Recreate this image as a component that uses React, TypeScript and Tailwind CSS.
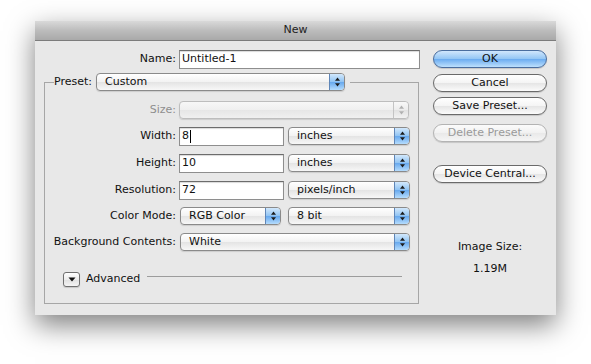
import React from "react";

function Stepper({ disabled }: { disabled?: boolean }) {
  return (
    <div
      className={
        disabled
          ? "flex h-full w-[15px] items-center justify-center rounded-r-[3px] border-l border-[#c4c4c4] bg-[linear-gradient(#f8f8f8,#ececec_50%,#e2e2e2_51%,#f2f2f2)]"
          : "flex h-full w-[15px] items-center justify-center rounded-r-[3px] border-l border-[#5f86b8] bg-[linear-gradient(#d2e8fc,#8fc3f3_50%,#66a8ee_51%,#b5dcfd)]"
      }
    >
      <svg width="7" height="10" viewBox="0 0 7 10">
        <path d="M3.5 0.5 L6 3.8 L1 3.8 Z" fill={disabled ? "#b0b0b0" : "#1b1b1b"} />
        <path d="M3.5 9.5 L6 6.2 L1 6.2 Z" fill={disabled ? "#b0b0b0" : "#1b1b1b"} />
      </svg>
    </div>
  );
}

function Select({ label, w, disabled }: { label: string; w: string; disabled?: boolean }) {
  return (
    <div
      className={
        "flex h-[18px] items-center overflow-hidden rounded-[4px] border shadow-[0_1px_1px_rgba(0,0,0,0.12)] " +
        w +
        (disabled
          ? " border-[#bdbdbd] bg-[linear-gradient(#f7f7f7,#efefef_50%,#e6e6e6_51%,#f0f0f0)]"
          : " border-[#8a8a8a] bg-[linear-gradient(#ffffff,#f2f2f2_50%,#e4e4e4_51%,#f7f7f7)]")
      }
    >
      <span className="flex-1 truncate pl-[8px] leading-[16px] text-[#111]">{label}</span>
      <Stepper disabled={disabled} />
    </div>
  );
}

function Input({ value, w, cursor }: { value: string; w: string; cursor?: boolean }) {
  return (
    <div
      className={
        "flex h-[19px] items-center border border-[#8e8e8e] border-t-[#6c6c6c] bg-white pl-[2px] shadow-[inset_0_1px_1px_rgba(0,0,0,0.15)] " +
        w
      }
    >
      <span className="leading-[16px] text-[#111]">{value}</span>
      {cursor && <span className="ml-[1px] h-[13px] w-[1px] bg-black" />}
    </div>
  );
}

function Button({ label, kind }: { label: string; kind?: "default" | "disabled" }) {
  const cls =
    kind === "default"
      ? "border-[#4a6d9e] bg-[linear-gradient(#d0e6fc,#92c5f4_50%,#6aabf0_51%,#bde0fd)] text-[#111]"
      : kind === "disabled"
      ? "border-[#b3b3b3] bg-[linear-gradient(#fbfbfb,#f1f1f1_50%,#e9e9e9_51%,#f5f5f5)] text-[#9a9a9a]"
      : "border-[#6a6a6a] bg-[linear-gradient(#ffffff,#f4f4f4_50%,#e5e5e5_51%,#fbfbfb)] text-[#111]";
  return (
    <div
      className={
        "flex h-[18px] w-[114px] items-center justify-center rounded-full border leading-[16px] shadow-[0_1px_1px_rgba(0,0,0,0.15)] " +
        cls
      }
    >
      {label}
    </div>
  );
}

function Row({ label, children, mt, dim }: { label: string; children: React.ReactNode; mt: string; dim?: boolean }) {
  return (
    <div className={"flex h-[18px] items-center " + mt}>
      <div className={"w-[131px] text-right " + (dim ? "text-[#8e8e8e]" : "text-[#111]")}>{label}</div>
      <div className="ml-[3px] flex items-center gap-[4px]">{children}</div>
    </div>
  );
}

export default function App() {
  return (
    <div className="h-[364px] w-[591px] overflow-hidden bg-white pl-[35px] pt-[21px] font-['DejaVu_Sans',sans-serif] text-[11px]">
      <div className="w-[521px] shadow-[0_10px_26px_rgba(0,0,0,0.5)]">
        <div className="flex h-[20px] items-center justify-center border-b border-[#7c7c7c] bg-[linear-gradient(#d9d9d9,#bcbcbc_50%,#a9a9a9)] text-[#222]">
          New
        </div>
        <div className="flex h-[274px] bg-[#e8e8e8]">
          <div className="w-[398px] pl-[9px]">
            <div className="mt-[9px] flex h-[18px] items-center">
              <div className="w-[132px] text-right text-[#111]">Name:</div>
              <Input value="Untitled-1" w="ml-[3px] w-[241px]" />
            </div>
            <fieldset className="mt-[5px] w-[375px] border border-[#a6a6a6] pb-[16px]">
              <legend className="ml-[9px] pr-[5px]">
                <div className="flex h-[18px] items-center">
                  <span className="text-[#111]">Preset:</span>
                  <Select label="Custom" w="ml-[4px] w-[249px]" />
                </div>
              </legend>
              <Row label="Size:" mt="mt-[10px]" dim>
                <Select label="" w="w-[230px]" disabled />
              </Row>
              <Row label="Width:" mt="mt-[8px]">
                <Input value="8" w="w-[105px]" cursor />
                <Select label="inches" w="w-[122px]" />
              </Row>
              <Row label="Height:" mt="mt-[9px]">
                <Input value="10" w="w-[105px]" />
                <Select label="inches" w="w-[122px]" />
              </Row>
              <Row label="Resolution:" mt="mt-[9px]">
                <Input value="72" w="w-[105px]" />
                <Select label="pixels/inch" w="w-[122px]" />
              </Row>
              <Row label="Color Mode:" mt="mt-[8px]">
                <Select label="RGB Color" w="ml-[1px] w-[101px]" />
                <Select label="8 bit" w="ml-[3px] w-[122px]" />
              </Row>
              <Row label="Background Contents:" mt="mt-[8px]">
                <Select label="White" w="ml-[1px] w-[230px]" />
              </Row>
              <div className="mt-[21px] flex h-[15px] items-center pl-[18px]">
                <div className="flex h-[15px] w-[17px] items-center justify-center rounded-[3px] border border-[#6f6f6f] bg-[linear-gradient(#ffffff,#ececec_50%,#e0e0e0_51%,#f4f4f4)] shadow-[0_1px_1px_rgba(0,0,0,0.15)]">
                  <svg width="8" height="5" viewBox="0 0 8 5">
                    <path d="M0.5 0.5 L7.5 0.5 L4 4.5 Z" fill="#111" />
                  </svg>
                </div>
                <span className="ml-[6px] text-[#111]">Advanced</span>
                <div className="mb-[6px] ml-[7px] mr-[16px] h-px flex-1 bg-[#9c9c9c]" />
              </div>
            </fieldset>
          </div>
          <div className="flex w-[114px] flex-col pt-[9px]">
            <Button label="OK" kind="default" />
            <div className="mt-[6px]">
              <Button label="Cancel" />
            </div>
            <div className="mt-[5px]">
              <Button label="Save Preset..." />
            </div>
            <div className="mt-[9px]">
              <Button label="Delete Preset..." kind="disabled" />
            </div>
            <div className="mt-[23px]">
              <Button label="Device Central..." />
            </div>
            <div className="mt-[57px] text-center leading-[14px] text-[#111]">Image Size:</div>
            <div className="mt-[8px] text-center leading-[14px] text-[#111]">1.19M</div>
          </div>
        </div>
      </div>
    </div>
  );
}
